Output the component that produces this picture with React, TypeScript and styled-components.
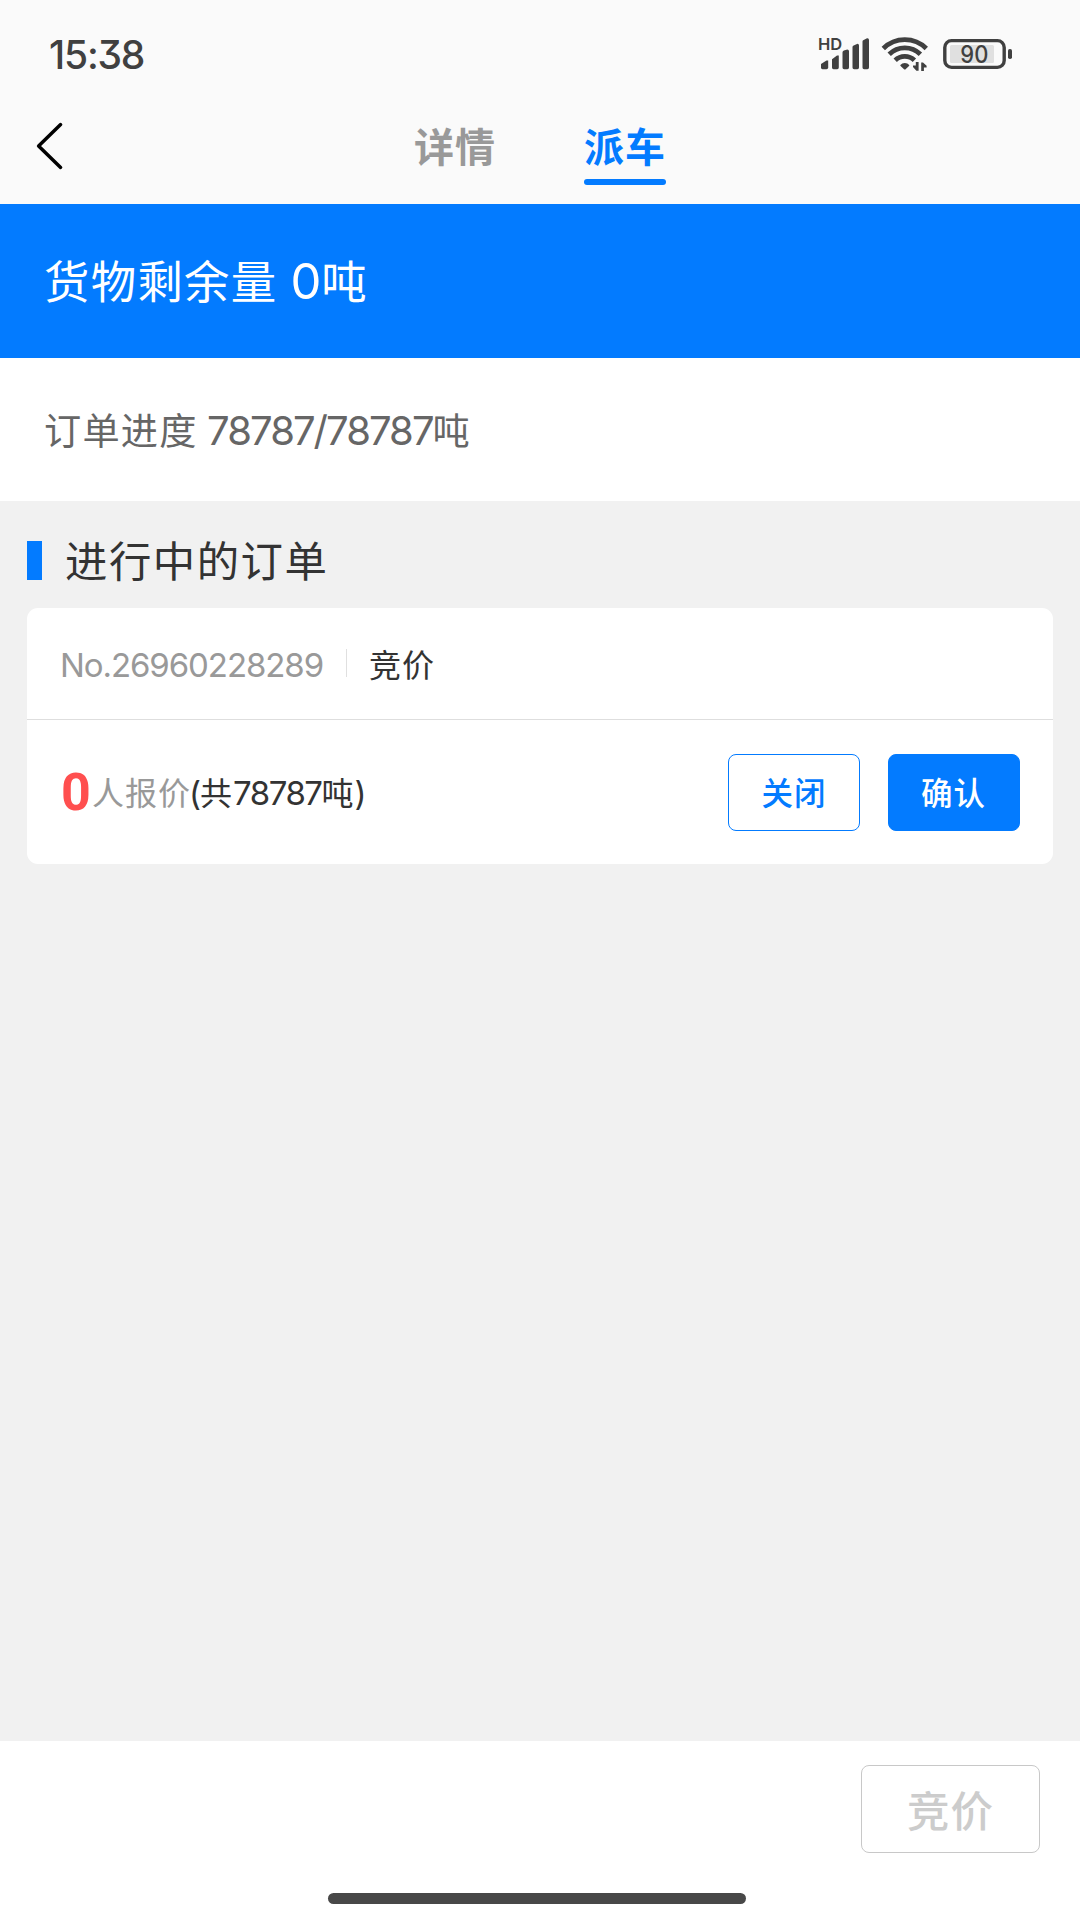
import React from 'react';
import styled, { createGlobalStyle } from 'styled-components';

const BLUE = '#037bff';
const INK = '#404040';

const GlobalStyle = createGlobalStyle`
  * { box-sizing: border-box; }
  body {
    margin: 0;
    background: #f1f1f1;
    font-family: "Noto Sans CJK SC", "Noto Sans", sans-serif;
  }
`;

const Screen = styled.div`
  display: flex;
  flex-direction: column;
  width: 1080px;
  height: 1920px;
  overflow: hidden;
  background: #f1f1f1;
`;

const StatusBar = styled.div`
  display: flex;
  align-items: center;
  justify-content: space-between;
  height: 108px;
  padding: 0 67px 0 49px;
  background: #fafafa;
`;

const Latin = styled.span<{ $size: number; $spacing?: number; $weight?: number }>`
  font-family: Inter, "Noto Sans", sans-serif;
  font-feature-settings: "cv09" 1;
  font-size: ${(p) => p.$size}px;
  font-weight: ${(p) => p.$weight ?? 400};
  letter-spacing: ${(p) => p.$spacing ?? 0}px;
  line-height: 1;
`;

const Clock = styled(Latin)`
  color: ${INK};
`;

const StatusIcons = styled.div`
  display: flex;
  align-items: center;
`;

const WifiSlot = styled.div`
  display: flex;
  margin: 0 13px 0 11px;
`;

const NavBar = styled.div`
  display: grid;
  grid-template-columns: 1fr auto 1fr;
  height: 96px;
  background: #fafafa;
`;

const BackButton = styled.button`
  display: flex;
  justify-self: start;
  align-items: flex-start;
  padding: 12px 0 0 34px;
  border: 0;
  background: none;
`;

const Tabs = styled.div`
  display: flex;
  gap: 88px;
`;

const Tab = styled.div<{ $active?: boolean }>`
  display: flex;
  flex-direction: column;
  width: 82px;
  padding-top: 7px;
  font-size: 40px;
  letter-spacing: 1px;
  font-weight: 700;
  line-height: 60px;
  white-space: nowrap;
  color: ${(p) => (p.$active ? BLUE : '#999')};

  &::after {
    content: '';
    height: 6px;
    margin-top: 4px;
    border-radius: 3px;
    background: ${(p) => (p.$active ? BLUE : 'transparent')};
  }
`;

const Banner = styled.div`
  height: 154px;
  padding: 43px 44px 0;
  background: ${BLUE};
  color: #fff;
  font-size: 45.4px;
  letter-spacing: 1.3px;
  line-height: 64px;
  white-space: pre;
`;

const BannerValue = styled(Latin)`
  margin-left: 1.5px;
`;

const Progress = styled.div`
  height: 143px;
  padding: 46px 44px 0;
  background: #fff;
  color: #666;
  font-size: 37.2px;
  letter-spacing: 1.2px;
  line-height: 50px;
  white-space: pre;
`;

const Orders = styled.main`
  flex: 1;
  padding: 0 27px;
`;

const SectionTitle = styled.h2`
  display: flex;
  align-items: center;
  gap: 23px;
  height: 107px;
  margin: 0;
  padding-top: 18px;
  color: #333;
  font-size: 42.4px;
  letter-spacing: 1.5px;
  font-weight: 400;
  line-height: 1;

  &::before {
    content: '';
    width: 15px;
    height: 39px;
    margin-bottom: 6px;
    background: ${BLUE};
  }
`;

const SectionText = styled.span`
  padding-bottom: 9px;
`;

const Card = styled.section`
  height: 256px;
  border-radius: 11px;
  background: #fff;
`;

const CardHead = styled.div`
  display: flex;
  align-items: center;
  height: 112px;
  padding: 0 33px;
  border-bottom: 1px solid #dedede;
`;

const OrderNo = styled(Latin)`
  width: 286px;
  padding-top: 4px;
  color: #999;
  white-space: nowrap;
`;

const OrderType = styled.span`
  display: flex;
  align-items: center;
  color: #333;
  font-size: 32px;
  letter-spacing: 1px;
  line-height: 44px;
  padding-bottom: 2px;

  &::before {
    content: '';
    width: 1px;
    height: 28px;
    margin-right: 22px;
    background: #e0e0e0;
  }
`;

const CardBody = styled.div`
  display: flex;
  align-items: center;
  height: 144px;
  padding: 0 33px;
`;

const Quote = styled.div`
  display: flex;
  align-items: center;
  flex: 1;
  color: #333;
  font-size: 32px;
  letter-spacing: 1px;
  line-height: 44px;
  white-space: nowrap;
`;

const QuoteCount = styled(Latin)`
  width: 32px;
  padding: 2px 0 0 1px;
  font-family: Roboto, sans-serif;
  color: #ff4f4f;
`;

const QuoteText = styled.span`
  padding-bottom: 2px;
`;

const Paren = styled(Latin)`
  margin-left: -2px;
`;

const Muted = styled.span`
  color: #999;
`;

const Actions = styled.div`
  display: flex;
  gap: 27.5px;
  margin-right: 0.5px;
`;

const Button = styled.button<{ $primary?: boolean }>`
  width: 132px;
  height: 77px;
  padding: 0 0 1px;
  border: 1.5px solid ${BLUE};
  border-radius: 8px;
  background: ${(p) => (p.$primary ? BLUE : '#fff')};
  color: ${(p) => (p.$primary ? '#fff' : BLUE)};
  font-family: inherit;
  font-size: 31.5px;
  letter-spacing: 1px;
  font-weight: 500;
  line-height: 1;
`;

const Footer = styled.footer`
  display: flex;
  flex-direction: column;
  height: 179px;
  padding: 24px 40px 0 0;
  background: #fff;
`;

const BidButton = styled(Button)`
  align-self: flex-end;
  width: 179px;
  height: 88px;
  padding: 1px 0 0;
  border-color: #c8c8c8;
  color: #ccc;
  font-size: 42.5px;
`;

const HomeIndicator = styled.div`
  width: 418px;
  height: 11px;
  margin: 40px 0 0 328px;
  border-radius: 6px;
  background: #484848;
`;

function SignalIcon() {
  return (
    <svg width="56" height="42" viewBox="814 34 56 42" fill={INK}>
      <text x="818" y="50.8" fontFamily="Inter, sans-serif" fontSize="16.5" fontWeight="600">HD</text>
      <path d="M821 65l5.5-3.6h1.7V68.5q0 1.7-1.7 1.7h-4q-1.5 0-1.5-1.7z" />
      <path d="M832 60.2l5-3.6h1.8V68.5q0 1.7-1.6 1.7h-3.6q-1.6 0-1.6-1.7z" />
      <path d="M842.5 53.4q0-1.5 1.4-2l3.4-.8q1.7 0 1.7 1.6V68.5q0 1.7-1.6 1.7h-3.3q-1.6 0-1.6-1.7z" />
      <path d="M852.5 48.2q0-1.2 1.2-1.6l3.3-1.7q2-.3 2 1.6V68.5q0 1.7-1.6 1.7h-3.3q-1.6 0-1.6-1.7z" />
      <path d="M862.5 42.6q0-1.2 1.2-1.6l3.3-1.7q2-.3 2 1.6V68.5q0 1.7-1.6 1.7h-3.3q-1.6 0-1.6-1.7z" />
    </svg>
  );
}

function WifiIcon() {
  return (
    <svg width="48" height="38" viewBox="881 36 48 38" fill="none" stroke={INK}>
      <path d="M883.3 49.5a30.5 30.5 0 0 1 43 0" strokeWidth="4.8" />
      <path d="M889.2 55.3a22.2 22.2 0 0 1 31.2 0" strokeWidth="4.8" />
      <path d="M895.2 61.2a13.8 13.8 0 0 1 19.2 0" strokeWidth="4.8" />
      <path d="M904.8 64q2.8 0 4.4 1.9.3.5-.2 1l-3.4 3.3q-.8.7-1.6 0l-3.4-3.3q-.5-.5-.2-1 1.6-1.9 4.4-1.9z" fill={INK} stroke="none" />
      <path d="M918.6 63v8.7h-2.2l-3.4-3.6v-1.6h2.8V63zM921.2 71.9V63.4h1.8l3.6 3.4v1.7h-2.7v3.4z" fill={INK} stroke="none" />
    </svg>
  );
}

function BatteryIcon() {
  return (
    <svg width="71" height="38" viewBox="942 35 71 38">
      <rect x="944.8" y="40.6" width="59.4" height="26.8" rx="6.8" fill="none" stroke={INK} strokeWidth="3.4" />
      <rect x="950" y="45" width="44" height="18" rx="1.5" fill="#e0e0e0" />
      <rect x="1008" y="49" width="4" height="10" rx="1.8" fill={INK} />
      <text x="960.3" y="62.8" fontFamily="Inter, sans-serif" fontSize="24" fontWeight="500" fill={INK} textLength="28" lengthAdjust="spacingAndGlyphs">90</text>
    </svg>
  );
}

function BackIcon() {
  return (
    <svg width="32" height="52" viewBox="34 120 32 52" fill="none" stroke="#000" strokeWidth="3.5" strokeLinecap="round" strokeLinejoin="round">
      <path d="M60.6 124.6L38.6 146 60.6 167.4" />
    </svg>
  );
}

export default function App() {
  return (
    <Screen>
      <GlobalStyle />
      <StatusBar>
        <Clock $size={39} $spacing={-1.2} $weight={500}>15:38</Clock>
        <StatusIcons>
          <SignalIcon />
          <WifiSlot><WifiIcon /></WifiSlot>
          <BatteryIcon />
        </StatusIcons>
      </StatusBar>
      <NavBar>
        <BackButton aria-label="返回"><BackIcon /></BackButton>
        <Tabs>
          <Tab>详情</Tab>
          <Tab $active>派车</Tab>
        </Tabs>
      </NavBar>
      <Banner>货物剩余量 <BannerValue $size={49} $spacing={0}>0</BannerValue>吨</Banner>
      <Progress>订单进度 <Latin $size={40} $spacing={-1.95}>78787/78787</Latin>吨</Progress>
      <Orders>
        <SectionTitle><SectionText>进行中的订单</SectionText></SectionTitle>
        <Card>
          <CardHead>
            <OrderNo $size={33} $spacing={-1.08}>No.26960228289</OrderNo>
            <OrderType>竞价</OrderType>
          </CardHead>
          <CardBody>
            <Quote>
              <QuoteCount $size={52} $weight={700}>0</QuoteCount>
              <QuoteText>
                <Muted>人报价</Muted>
                <Paren $size={33} $spacing={-1}>(</Paren>共<Latin $size={33} $spacing={-1.5}>78787</Latin>吨<Latin $size={33}>)</Latin>
              </QuoteText>
            </Quote>
            <Actions>
              <Button>关闭</Button>
              <Button $primary>确认</Button>
            </Actions>
          </CardBody>
        </Card>
      </Orders>
      <Footer>
        <BidButton>竞价</BidButton>
        <HomeIndicator />
      </Footer>
    </Screen>
  );
}
